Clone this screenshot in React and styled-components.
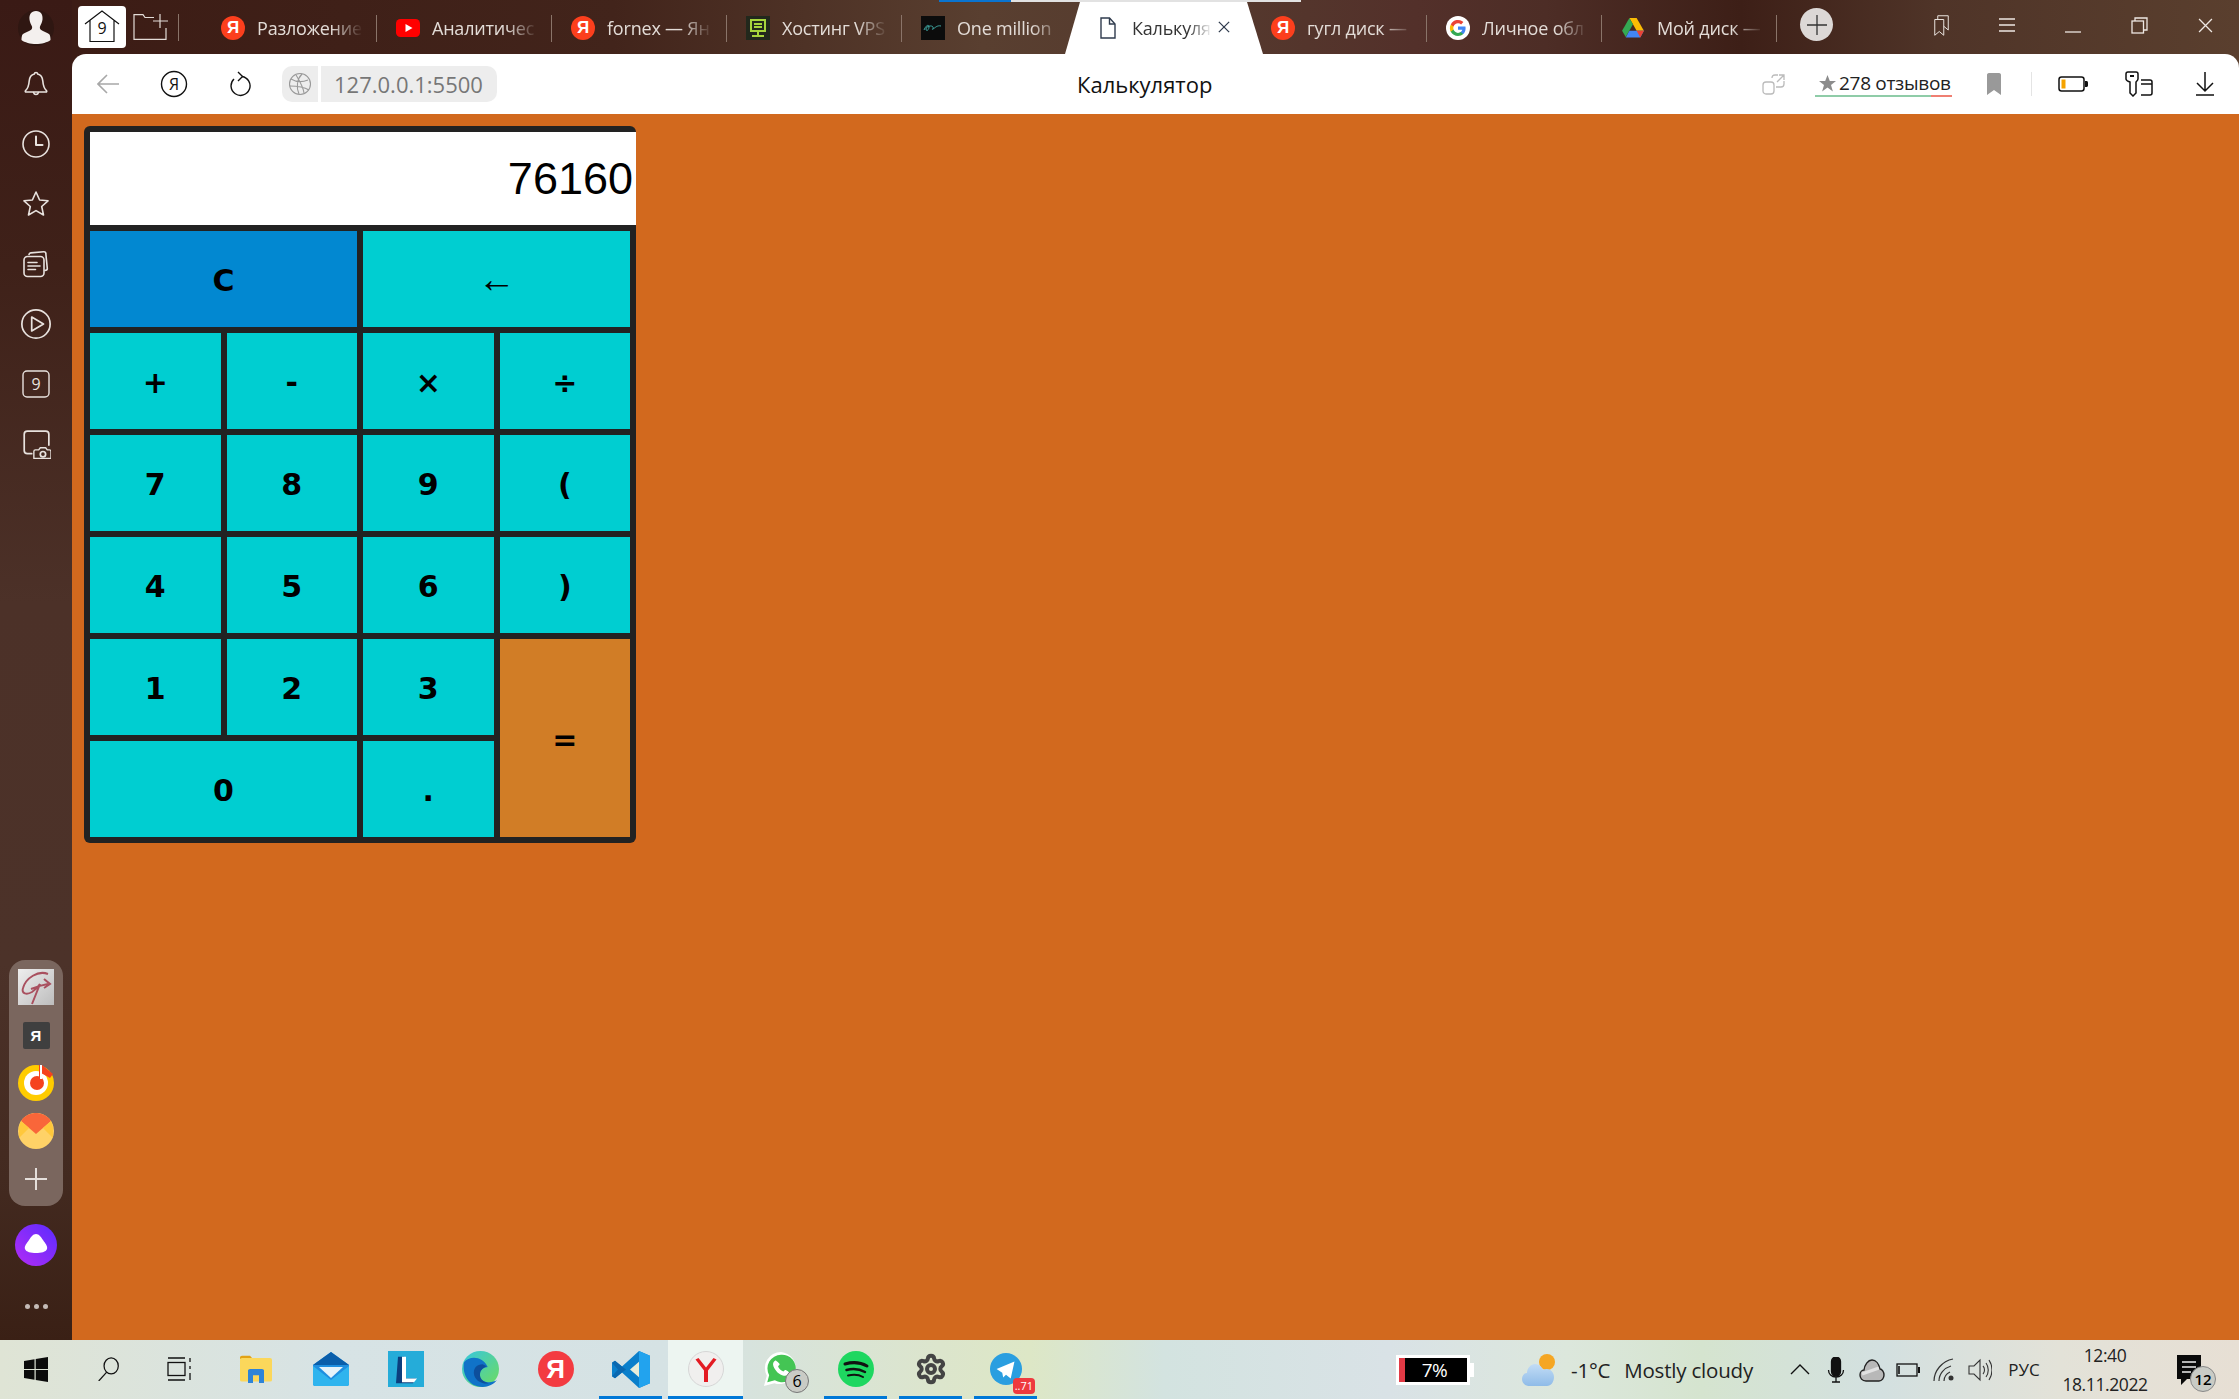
import styled, { createGlobalStyle } from 'styled-components'
import { Settings } from 'lucide-react'

const Global = createGlobalStyle`
  html, body { margin: 0; padding: 0; }
  body { font-family: "Open Sans", "Noto Sans", sans-serif; }
`

const Screen = styled.div`
  width: 2239px;
  height: 1399px;
  display: flex;
  flex-direction: column;
  overflow: hidden;
`
const Main = styled.div`
  flex: 1;
  display: flex;
  min-height: 0;
`
const Sidebar = styled.aside`
  width: 72px;
  flex: none;
  display: flex;
  flex-direction: column;
  align-items: center;
  background: linear-gradient(180deg, #3a1a15 0%, #3f2119 20%, #4c3128 45%, #4c3229 72%, #432a20 88%, #3a2015 100%);
`
const Avatar = styled.div`
  height: 54px;
  display: flex;
  align-items: center;
  justify-content: center;
  padding-top: 2px;
  box-sizing: border-box;
`
const SideButton = styled.div`
  height: 60px;
  width: 72px;
  flex: none;
  display: flex;
  align-items: center;
  justify-content: center;
`
const AppsPanel = styled.div`
  margin-top: auto;
  width: 54px;
  height: 246px;
  box-sizing: border-box;
  padding-top: 3px;
  background: #7a665e;
  border-radius: 16px;
  display: flex;
  flex-direction: column;
  align-items: center;
`
const PanelApp = styled.div`
  height: 48px;
  width: 54px;
  flex: none;
  display: flex;
  align-items: center;
  justify-content: center;
`
const YaSquare = styled.span`
  width: 27px;
  height: 27px;
  border-radius: 2px;
  background: #3f3f3f;
  color: #fff;
  font: 700 15px "Liberation Sans", sans-serif;
  display: flex;
  align-items: center;
  justify-content: center;
`
const Alice = styled.div`
  margin-top: 18px;
  height: 42px;
`
const Dots = styled.div`
  margin: 38px 0 31px;
  display: flex;
  gap: 4px;
  span {
    width: 5px;
    height: 5px;
    border-radius: 50%;
    background: #c4bbb6;
  }
`

const Browser = styled.div`
  flex: 1;
  min-width: 0;
  display: flex;
  flex-direction: column;
  background: linear-gradient(90deg, #3c1c15 0%, #42241b 25%, #593f30 42%, #553a2e 52%, #53302a 62%, #4d2d26 68%, #3d1f17 77%, #4f3428 86%, #5a3f2e 100%);
`
const TabStrip = styled.div`
  position: relative;
  height: 54px;
  flex: none;
  display: flex;
  align-items: flex-start;
  padding-left: 6px;
`
const LoadBar = styled.div`
  position: absolute;
  top: 0;
  left: 867px;
  width: 362px;
  height: 2px;
  background: linear-gradient(90deg, #0a74d0 0 72px, #e2e2e2 72px);
`
const HomeButton = styled.div`
  width: 48px;
  height: 42px;
  margin-top: 6px;
  flex: none;
  background: #fff;
  border-radius: 4px;
  display: flex;
  align-items: center;
  justify-content: center;
`
const NewGroup = styled.div`
  margin: 14px 0 0 7px;
  width: 46px;
  height: 27px;
  flex: none;
  border-right: 1px solid #8a7469;
  box-sizing: border-box;
`
const TabList = styled.div`
  display: flex;
  margin-left: 23px;
  flex: none;
`
const Tab = styled.div`
  position: relative;
  width: 175px;
  height: 52px;
  margin-top: 2px;
  flex: none;
  box-sizing: border-box;
  display: flex;
  align-items: center;
  padding: 0 0 0 19px;
  color: ${p => (p.$active ? '#333' : '#e3dcd7')};
  font-size: 18px;
  letter-spacing: -0.2px;
  &::before {
    content: ${p => (p.$active ? '""' : 'none')};
    position: absolute;
    top: 0;
    bottom: 0;
    left: -12px;
    right: -11px;
    background: #fff;
    clip-path: polygon(15px 0, calc(100% - 16px) 0, 100% 100%, 0 100%);
  }
  &::after {
    content: ${p => (p.$sep ? '""' : 'none')};
    position: absolute;
    right: 0;
    top: 13px;
    height: 27px;
    width: 1px;
    background: #8a7469;
  }
`
const FavSlot = styled.span`
  position: relative;
  width: 24px;
  height: 24px;
  flex: none;
  display: flex;
  align-items: center;
  justify-content: center;
`
const TabTitle = styled.span`
  position: relative;
  margin-left: 12px;
  width: ${p => (p.$active ? '80px' : '106px')};
  white-space: nowrap;
  overflow: hidden;
  -webkit-mask-image: linear-gradient(90deg, #000 70%, transparent 100%);
  mask-image: linear-gradient(90deg, #000 70%, transparent 100%);
`
const TabClose = styled.span`
  position: relative;
  margin: -3px 0 0 6px;
  display: flex;
`
const YaBadge = styled.span`
  width: ${p => p.$size || 24}px;
  height: ${p => p.$size || 24}px;
  border-radius: 50%;
  background: ${p => p.$bg || '#fc3f1d'};
  color: #fff;
  font: 700 ${p => (p.$size ? 26 : 17)}px "Liberation Sans", sans-serif;
  display: flex;
  align-items: center;
  justify-content: center;
  letter-spacing: 0;
`
const PlusButton = styled.div`
  width: 33px;
  height: 33px;
  margin: 8px 0 0 23px;
  flex: none;
  border-radius: 50%;
  background: #dcd8d6;
  display: flex;
  align-items: center;
  justify-content: center;
`
const WindowControls = styled.div`
  margin-left: auto;
  margin-right: 1px;
  display: flex;
  height: 50px;
`
const WindowButton = styled.div`
  width: 66px;
  height: 50px;
  display: flex;
  align-items: center;
  justify-content: center;
`

const Toolbar = styled.div`
  height: 60px;
  flex: none;
  box-sizing: border-box;
  background: #fff;
  border-radius: 14px 14px 0 0;
  display: grid;
  grid-template-columns: 1005px auto 1fr;
  align-items: center;
`
const NavGroup = styled.div`
  display: flex;
  align-items: center;
  padding-left: 3px;
`
const NavButton = styled.div`
  width: 66px;
  height: 40px;
  flex: none;
  display: flex;
  align-items: center;
  justify-content: center;
`
const GlobeChip = styled.div`
  width: 36px;
  height: 36px;
  margin-left: 9px;
  background: #ededed;
  border-radius: 10px 0 0 10px;
  display: flex;
  align-items: center;
  justify-content: center;
`
const UrlChip = styled.div`
  width: 176px;
  height: 36px;
  margin-left: 3px;
  box-sizing: border-box;
  padding-left: 13px;
  background: #ededed;
  border-radius: 0 10px 10px 0;
  color: #777;
  font-size: 22px;
  line-height: 36px;
`
const PageTitle = styled.div`
  font-size: 22px;
  color: #111;
`
const ToolGroup = styled.div`
  display: flex;
  align-items: center;
  justify-content: flex-end;
  margin-right: 1px;
`
const Reviews = styled.div`
  margin: 0 5px 0 21px;
  width: 137px;
  height: 26px;
  box-sizing: border-box;
  display: flex;
  align-items: center;
  gap: 3px;
  padding-left: 4px;
  border-bottom: 2px solid;
  border-image: linear-gradient(90deg, #8fcca8 0 115px, #ef7f72 115px) 1;
  color: #222;
  font-size: 19px;
  letter-spacing: -0.3px;
  white-space: nowrap;
`
const ToolSlot = styled.div`
  width: ${p => p.$w || 66}px;
  height: 40px;
  flex: none;
  display: flex;
  align-items: center;
  justify-content: center;
`
const ToolDivider = styled.div`
  width: 1px;
  height: 24px;
  background: #e4e4e4;
  margin: 0 8px 0 0;
`

const Page = styled.main`
  flex: 1;
  background: #d2691e;
  padding: 12px;
  box-sizing: border-box;
`
const Calculator = styled.div`
  display: inline-grid;
  grid-template-columns: repeat(4, 130.5px);
  grid-template-rows: 93px repeat(6, 96px);
  gap: 6px;
  padding: 6px;
  background: #222;
  border-radius: 6px;
  vertical-align: top;
`
const Display = styled.div`
  grid-column: 1 / -1;
  width: calc(100% + 6px);
  background: #fff;
  color: #000;
  font: 400 45px "Liberation Sans", sans-serif;
  display: flex;
  align-items: center;
  justify-content: flex-end;
  padding-right: 3px;
  box-sizing: border-box;
`
const Key = styled.button`
  border: 0;
  padding: 2px 0 0;
  margin: 0;
  color: #000;
  font: 700 30px "DejaVu Sans", Verdana, sans-serif;
  background: ${p => p.$bg || '#00ced1'};
  grid-column: ${p => (p.$wide ? 'span 2' : 'auto')};
  grid-row: ${p => (p.$tall ? 'span 2' : 'auto')};
`
const ThinKey = styled(Key)`
  padding: 0;
  font: 400 38px "Liberation Serif", serif;
`

const Taskbar = styled.footer`
  height: 59px;
  flex: none;
  display: flex;
  align-items: stretch;
  color: #222;
  background: linear-gradient(90deg, #dfe4d5 0%, #d7e3e5 15%, #d5e2e4 30%, #dce5cc 42%, #dde7c6 46%, #d3e3e0 52%, #d9e2e6 62%, #dce7dc 70%, #d5e4cf 76%, #d3e0e0 84%, #e3e2d8 92%, #e7dfd4 100%);
`
const TaskButton = styled.div`
  position: relative;
  width: ${p => p.$w || 75}px;
  flex: none;
  display: flex;
  align-items: center;
  justify-content: center;
  padding-bottom: 1px;
  box-sizing: border-box;
  background: ${p => (p.$active ? '#edf5f1' : 'transparent')};
  margin-left: ${p => p.$ml || 0}px;
  &::after {
    content: ${p => (p.$open ? '""' : 'none')};
    position: absolute;
    left: ${p => (p.$active ? 0 : 6)}px;
    right: ${p => (p.$active ? 0 : 6)}px;
    bottom: 0;
    height: 3px;
    background: #0078d7;
  }
`
const CountBadge = styled.span`
  position: absolute;
  right: 9px;
  bottom: 6px;
  width: 24px;
  height: 24px;
  border-radius: 50%;
  background: #c9cbc5;
  border: 1px solid #777;
  box-sizing: border-box;
  color: #000;
  font-size: 16px;
  display: flex;
  align-items: center;
  justify-content: center;
`
const RedBadge = styled.span`
  position: absolute;
  right: 8px;
  bottom: 5px;
  padding: 0 2px;
  height: 16px;
  border-radius: 4px;
  background: #ee3a3f;
  color: #fff;
  font-size: 11px;
  line-height: 15px;
`
const Tray = styled.div`
  margin-left: auto;
  display: flex;
  align-items: center;
`
const BatteryWidget = styled.div`
  position: relative;
  width: 74px;
  height: 30px;
  flex: none;
  margin-top: 1px;
  box-sizing: border-box;
  border: 3px solid #fff;
  background: linear-gradient(90deg, #e23a45 0 6px, #000 6px);
  color: #fff;
  font-size: 19px;
  text-align: center;
  line-height: 24px;
  padding-left: 3px;
  letter-spacing: -0.5px;
  &::after {
    content: "";
    position: absolute;
    right: -7px;
    top: 5px;
    width: 4px;
    height: 14px;
    background: #fff;
  }
`
const WeatherIcon = styled.div`
  margin: 3px 0 0 52px;
  width: 36px;
  flex: none;
  display: flex;
`
const WeatherText = styled.div`
  margin-left: 13px;
  width: 211px;
  flex: none;
  display: flex;
  gap: 14px;
  font-size: 20.5px;
  letter-spacing: -0.2px;
  white-space: nowrap;
  color: #222;
`
const TrayIcon = styled.div`
  width: 36px;
  flex: none;
  display: flex;
  justify-content: center;
  position: relative;
`
const Lang = styled.div`
  width: 52px;
  flex: none;
  text-align: center;
  font-size: 17px;
`
const Clock = styled.div`
  width: 86px;
  margin-left: 12px;
  flex: none;
  text-align: center;
  font-size: 17.5px;
  line-height: 29px;
  letter-spacing: -0.4px;
`
const NotifyButton = styled.div`
  position: relative;
  width: 50px;
  margin-left: 17px;
  margin-right: 24px;
  flex: none;
  display: flex;
  justify-content: center;
`
const NotifyCount = styled.span`
  position: absolute;
  left: 25px;
  top: 11px;
  width: 26px;
  height: 26px;
  border-radius: 50%;
  border: 1px solid #888;
  background: #c9cbc5;
  box-sizing: border-box;
  color: #000;
  font-size: 15px;
  font-weight: 600;
  display: flex;
  align-items: center;
  justify-content: center;
`

const Line = ({ size = 28, color = '#e8e2de', sw = 1.6, children }) => (
  <svg width={size} height={size} viewBox="0 0 28 28" fill="none" stroke={color} strokeWidth={sw} strokeLinecap="round" strokeLinejoin="round">
    {children}
  </svg>
)

const Bell = () => <Line><path d="M14 2.5c-1 0-1.6.7-1.7 1.6C9 5 7.5 7.8 7.2 11c-.3 4-.8 7-3.7 9.7-.5.6-.2 1.3.6 1.3h19.8c.8 0 1.1-.7.6-1.3-2.9-2.7-3.4-5.7-3.7-9.7-.3-3.2-1.8-6-5.1-6.9C15.6 3.2 15 2.5 14 2.5Z" /><path d="M11.5 22.5c.4 1.3 1.3 2 2.500 2s2.100-.7 2.500-2" /></Line>
const ClockIcon = () => <Line><circle cx="14" cy="14" r="13" /><path d="M14 6.500v8.500h6.500" strokeWidth="2" /></Line>
const Star = () => <Line><path d="M14 2l3.600 8 8.400.8-6.300 5.700 1.800 8.500L14 20.600 6.500 25l1.800-8.500L2 10.800l8.400-.8Z" /></Line>
const Collections = () => <Line><rect x="2" y="6.500" width="20" height="20" rx="3.500" /><path d="M7 4.500c.2-1 .9-1.500 1.800-1.600l13-1.200c1-.1 2 .7 2 1.700l1.500 15c.1 1-.5 1.900-2.300 2.100" /><path d="M6 12.500h9M6 16h12M6 19.500h7.500" /></Line>
const Play = () => <Line size={30}><circle cx="14" cy="14" r="13.200" /><path d="M10 7.500l11 6.500-11 6.500Z" /></Line>
const NineBox = () => (
  <svg width="28" height="28" viewBox="0 0 28 28" fill="none" stroke="#e8e2de" strokeWidth="1.4">
    <rect x="1" y="1" width="26" height="26" rx="4" />
    <text x="14" y="20" textAnchor="middle" fontSize="16" fill="#e8e2de" stroke="none" fontFamily="Open Sans">9</text>
  </svg>
)
const Camera = () => <Line size={30}><path d="M10 23H6c-2 0-3-1-3-3V5c0-2 1-3 3-3h17c2 0 3 1 3 3v10" /><path d="M12 27.500v-6.500c0-1 .5-1.500 1.500-1.500h3l1.500-2h5l1.500 2h2c1 0 1.500.5 1.500 1.500v6.500Z" fill="#442a21" strokeWidth="1.3" /><circle cx="20.500" cy="23.500" r="2.500" /></Line>

const AvatarIcon = () => (
  <svg width="36" height="36" viewBox="0 0 36 36">
    <circle cx="18" cy="18" r="18" fill="#2f1712" />
    <path d="M18 1c-5 0-7 4-6.500 8.500.3 2.500 1.300 4.500 2.300 6.500.7 1.500.4 3-1 4-2 1.500-5.800 2.500-7.800 4-1.300 1-1.500 4-1.500 6 3 2.500 9 4 14.500 4s11.500-1.500 14.500-4c0-2-.2-5-1.500-6-2-1.500-5.800-2.500-7.800-4-1.400-1-1.700-2.500-1-4 1-2 2-4 2.300-6.500C25 5 23 1 18 1Z" fill="#f4f0ee" />
  </svg>
)
const HomeIcon = () => (
  <svg width="36" height="34" viewBox="0 0 36 34" fill="none" stroke="#111" strokeWidth="1.2">
    <path d="M1 14L18 1l17 13M6 10.500V31.500h24V10.500" />
    <text x="18" y="24" textAnchor="middle" fontSize="16" fill="#111" stroke="none" fontFamily="Open Sans">9</text>
  </svg>
)
const NewFolder = () => (
  <svg width="36" height="26" viewBox="0 0 36 26" fill="none" stroke="#e3dcd7" strokeWidth="1.2">
    <path d="M21 3.500H12L10 .7H1v24.600h32V14M27 0v14M20 7h15" />
  </svg>
)
const YoutubeFav = () => (
  <svg width="24" height="18" viewBox="0 0 24 18"><rect width="24" height="18" rx="4.500" fill="#f00" /><path d="M9.500 5l7 4-7 4Z" fill="#fff" /></svg>
)
const VpsFav = () => (
  <svg width="24" height="24" viewBox="0 0 24 24"><rect width="24" height="24" fill="#22281c" /><g fill="none" stroke="#a7d53c" strokeWidth="2"><rect x="5" y="4" width="14" height="11" /><path d="M8 8h8M8 11h8M12 15v4M6 20h12" /></g></svg>
)
const MillionFav = () => (
  <svg width="24" height="24" viewBox="0 0 24 24"><rect width="24" height="24" fill="#0c0c0c" /><path d="M3 14c2-5 5-6 5-3s-3 5-3 2 6-4 7-2-2 3 0 2 4-4 8-3" fill="none" stroke="#3fa7a2" strokeWidth="1" /></svg>
)
const PageFav = () => (
  <svg width="16" height="22" viewBox="0 0 16 22" fill="#fff" stroke="#2f3b4d" strokeWidth="1.4">
    <path d="M1 1h8.500L15 7v14H1Z" /><path d="M9.500 1v6H15" fill="none" />
  </svg>
)
const GoogleFav = () => (
  <svg width="24" height="24" viewBox="0 0 24 24">
    <circle cx="12" cy="12" r="12" fill="#fff" />
    <path d="M19.600 12.200c0-.6-.1-1.100-.2-1.600H12v3.100h4.300c-.2 1-.7 1.800-1.600 2.400v2h2.600c1.500-1.400 2.300-3.400 2.300-5.900Z" fill="#4285f4" />
    <path d="M12 20c2.200 0 4-.7 5.300-1.900l-2.600-2c-.7.5-1.600.8-2.700.8-2.100 0-3.900-1.400-4.500-3.300H4.800v2.100C6.100 18.300 8.900 20 12 20Z" fill="#34a853" />
    <path d="M7.500 13.600c-.3-1-.3-2.100 0-3.100V8.400H4.800a8 8 0 0 0 0 7.300Z" fill="#fbbc05" />
    <path d="M12 7.200c1.200 0 2.300.4 3.100 1.200l2.300-2.300A8 8 0 0 0 4.800 8.400l2.700 2.100c.6-1.900 2.400-3.300 4.500-3.300Z" fill="#ea4335" />
  </svg>
)
const DriveFav = () => (
  <svg width="22" height="20" viewBox="0 0 24 22">
    <path d="M8 0h8l8 14h-8Z" fill="#fbbc04" />
    <path d="M8 0l4 7-8 14-4-7Z" fill="#34a853" />
    <path d="M8 14h16l-4 7.500H4Z" fill="#4285f4" />
    <path d="M16 14h8l-4 7.500Z" fill="#ea4335" />
  </svg>
)
const CloseX = ({ size = 12, color = '#2f3b4d', sw = 1.5 }) => (
  <svg width={size} height={size} viewBox="0 0 14 14" stroke={color} strokeWidth={sw}><path d="M1 1l12 12M13 1L1 13" /></svg>
)
const PlusIcon = ({ size = 20, color = '#333', sw = 1.3 }) => (
  <svg width={size} height={size} viewBox="0 0 20 20" stroke={color} strokeWidth={sw}><path d="M10 0v20M0 10h20" /></svg>
)
const Bookmarks = () => (
  <svg width="19" height="21" viewBox="0 0 20 28" fill="none" stroke="#eee7e2" strokeWidth="1.3">
    <path d="M1 6h12v21l-6-5-6 5Z" /><path d="M5 6V1h14v19l-6-5" />
  </svg>
)
const MenuLines = () => (
  <svg width="16" height="14" viewBox="0 0 16 14" stroke="#eee7e2" strokeWidth="1.3"><path d="M0 1h16M0 7h16M0 13h16" /></svg>
)
const MinLine = () => (
  <svg width="16" height="16" viewBox="0 0 16 16" stroke="#eee7e2" strokeWidth="1.3"><path d="M0 15h16" /></svg>
)
const RestoreIcon = () => (
  <svg width="17" height="17" viewBox="0 0 17 17" fill="none" stroke="#eee7e2" strokeWidth="1.3"><rect x="1" y="4" width="11.500" height="12" /><path d="M4 4V1h12v12h-3.500" /></svg>
)

const BackArrow = () => (
  <svg width="22" height="20" viewBox="0 0 22 20" fill="none" stroke="#a8a8a8" strokeWidth="1.6"><path d="M22 10H1M10 1l-9 9 9 9" /></svg>
)
const YaCircle = () => (
  <svg width="28" height="28" viewBox="0 0 28 28">
    <circle cx="14" cy="14" r="12.500" fill="none" stroke="#111" strokeWidth="1.4" />
    <text x="14" y="20" textAnchor="middle" fontSize="16" fill="#111" fontFamily="Open Sans">Я</text>
  </svg>
)
const Reload = () => (
  <svg width="22" height="26" viewBox="0 0 22 26" fill="none" stroke="#111" strokeWidth="1.4"><path d="M13 5.500a9.500 9.500 0 1 1-8 2.500" /><path d="M9 1l4.500 4.500L9 10" /></svg>
)
const Globe = () => (
  <svg width="24" height="24" viewBox="0 0 24 24" fill="none" stroke="#999" strokeWidth="1.1">
    <circle cx="12" cy="12" r="10.500" /><path d="M3 7c5 3 12 3 17 1M2 14c5 0 14 1 19 4M14 2c-5 5-6 13-3 20M8 3c3 5 7 11 8 18" />
  </svg>
)
const ShareLink = () => (
  <svg width="24" height="22" viewBox="0 0 24 22" fill="none" stroke="#bbb" strokeWidth="1.3">
    <rect x="1" y="9" width="11" height="12" rx="3" /><path d="M10 5c0-2 1-3 3-3h3M22 8v3c0 2-1 3-3 3h-5M15 9l7-7M17 2h5v5" />
  </svg>
)
const StarSolid = () => (
  <svg width="17" height="17" viewBox="0 0 17 17"><path d="M8.500 0l2.300 6H17l-5 3.900 1.900 6.600-5.400-3.900-5.400 3.900L5 9.900 0 6h6.200Z" fill="#8c8c8c" /></svg>
)
const BookmarkSolid = () => (
  <svg width="16" height="22" viewBox="0 0 16 22"><path d="M1 2c0-1 .5-2 2-2h10c1.500 0 2 1 2 2v20l-7-5-7 5Z" fill="#999" /></svg>
)
const BatteryTool = () => (
  <svg width="30" height="16" viewBox="0 0 30 16">
    <rect x="1" y="1" width="25" height="14" rx="2.500" fill="#fff" stroke="#111" strokeWidth="1.5" />
    <rect x="3.500" y="3.500" width="4" height="9" fill="#f5a300" />
    <path d="M27 5h1.500c.8 0 1.500.7 1.500 1.500v3c0 .8-.7 1.500-1.500 1.500H27Z" fill="#111" />
  </svg>
)
const KeyTool = () => (
  <svg width="28" height="26" viewBox="0 0 28 26" fill="none" stroke="#111" strokeWidth="1.5">
    <path d="M16 9h9c1.500 0 2 1 2 2v11c0 1-.5 2-2 2h-9" /><path d="M16 13h11" />
    <path d="M1 3c0-1 1-2 2-2h8c1 0 2 1 2 2v5c0 1-1 2-2 3v11l-3 3-3-3V11C2 10 1 9 1 8Z" fill="#fff" /><path d="M5 5h4" strokeWidth="2" />
  </svg>
)
const Download = () => (
  <svg width="20" height="24" viewBox="0 0 20 24" fill="none" stroke="#111" strokeWidth="1.5"><path d="M10 0v18M2 11l8 8 8-8M1 23h18" /></svg>
)

const GlyphG = () => (
  <svg width="36" height="36" viewBox="0 0 36 36">
    <defs><linearGradient id="gg" x1="0" y1="0" x2="1" y2="1"><stop offset="0" stopColor="#eee" /><stop offset="1" stopColor="#bdbdbd" /></linearGradient></defs>
    <rect width="36" height="36" fill="url(#gg)" />
    <path d="M30 5C20 1 8 9 5 19c-2 6 4 7 9 4 3-2 6-5 8-8l-8 20M13 20c5-2 11-4 17-5M26 10l6 5-6 4" fill="none" stroke="#a9505f" strokeWidth="2" />
  </svg>
)
const MusicApp = () => (
  <svg width="36" height="36" viewBox="0 0 36 36">
    <circle cx="18" cy="18" r="18" fill="#ffcc00" />
    <circle cx="18" cy="18" r="12" fill="#fff" />
    <circle cx="19" cy="18" r="7" fill="#f5421e" />
    <path d="M21 0h3l11 9-3 4-9-5v9h-2Z" fill="#f5421e" />
    <path d="M22 0h2v14h-2Z" fill="#fff" />
  </svg>
)
const MailApp = () => (
  <svg width="36" height="36" viewBox="0 0 36 36">
    <circle cx="18" cy="18" r="18" fill="#ffd267" />
    <path d="M3 8a18 18 0 0 1 30 0L18 21Z" fill="#f9663a" />
    <path d="M1 16c0-3 1-6 2-8l8 7-10 10c0-3 0-6 0-9ZM35 16c0-3-1-6-2-8l-8 7 10 10Z" fill="#ffc83c" />
  </svg>
)
const AliceIcon = () => (
  <svg width="42" height="42" viewBox="0 0 42 42">
    <defs><linearGradient id="al" x1="0" y1="1" x2="1" y2="0"><stop offset="0" stopColor="#b32cf5" /><stop offset="1" stopColor="#5a2cff" /></linearGradient></defs>
    <circle cx="21" cy="21" r="21" fill="url(#al)" />
    <path d="M21 10c3 0 5 3 7 6 2 3 5 6 4 9-1 3-6 4-11 4s-10-1-11-4c-1-3 2-6 4-9 2-3 4-6 7-6Z" fill="#fff" />
  </svg>
)

const WinLogo = () => (
  <svg width="24" height="25" viewBox="0 0 24 25" fill="#0b0b0b">
    <path d="M0 4l10.500-1.800V12H0ZM11.700 2L24 0v12H11.700ZM0 13h10.500v9.800L0 21ZM11.700 13H24v12l-12.300-2Z" />
  </svg>
)
const SearchIcon = () => (
  <svg width="25" height="24" viewBox="0 0 24 27" fill="none" stroke="#111" strokeWidth="1.4"><ellipse cx="15" cy="10" rx="8" ry="9" /><path d="M10 17L1 27" /></svg>
)
const TaskView = () => (
  <svg width="26" height="24" viewBox="0 0 26 24" fill="none" stroke="#111" strokeWidth="1.3"><rect x="1" y="5.500" width="17" height="13" /><path d="M1 1h17M1 23h17M23 1v4M23 9v3M23 16v7" /></svg>
)
const FolderIcon = () => (
  <svg width="32" height="28" viewBox="0 0 32 36" preserveAspectRatio="none">
    <path d="M0 3c0-1 1-2 2-2h8l3 4H0Z" fill="#e2a215" />
    <rect y="4" width="32" height="30" rx="2" fill="#fbd75b" />
    <path d="M8 36V20c0-1 1-2 2-2h12c1 0 2 1 2 2v16h-5v-10h-6v10Z" fill="#2e84d8" />
  </svg>
)
const MailIcon = () => (
  <svg width="36" height="34" viewBox="0 0 36 34">
    <path d="M18 0L36 13v19c0 1-1 2-2 2H2c-1 0-2-1-2-2V13Z" fill="#1f8fe0" />
    <path d="M0 13L18 0l18 13H0Z" fill="#0a5eaa" />
    <path d="M6 15h24L18 26Z" fill="#e6f3fa" />
    <path d="M0 14l18 14 18-14v18c0 1-1 2-2 2H2c-1 0-2-1-2-2Z" fill="#2fb4ee" />
  </svg>
)
const LIcon = () => (
  <svg width="36" height="36" viewBox="0 0 36 38" preserveAspectRatio="none">
    <rect width="36" height="38" fill="#25acd9" />
    <path d="M10 6h6v23h12l-3 5H8Z" fill="#0c3f7e" />
    <path d="M14 6h4v23h11l-3 4H14Z" fill="#fff" />
  </svg>
)
const EdgeIcon = () => (
  <svg width="37" height="36" viewBox="0 0 36 38" preserveAspectRatio="none">
    <defs>
      <linearGradient id="eg" x1="0" y1="0" x2="1" y2="1"><stop offset="0" stopColor="#36c6e0" /><stop offset="1" stopColor="#6fdc5e" /></linearGradient>
    </defs>
    <ellipse cx="18" cy="19" rx="18" ry="19" fill="url(#eg)" />
    <path d="M2 12C0 24 6 38 20 38c6 0 11-3 14-7-5 3-14 3-17-3-2-5 2-10 8-11C20 5 7 5 2 12Z" fill="#1073c8" />
    <path d="M20 14c-5 0-10 4-8 12 2 6 8 9 14 8-6-1-10-6-8-12 1-3 3-5 6-6Z" fill="#0d4f9c" />
  </svg>
)
const VsCode = () => (
  <svg width="38" height="37" viewBox="0 0 38 38" preserveAspectRatio="none">
    <path d="M27 0l11 5v28l-11 5-17-16-7 6-3-2V12l3-2 7 6Z" fill="#0a7fcb" />
    <path d="M27 0l11 5v28l-11 5Z" fill="#22a3ee" />
    <path d="M27 11l-9 8 9 8Z" fill="#e6edda" />
    <path d="M0 12l3-2 7 6 4 3-4 3-7 6-3-2 6-7Z" fill="#0a68b0" />
  </svg>
)
const YandexBrowser = () => (
  <svg width="36" height="36" viewBox="0 0 36 36">
    <circle cx="18" cy="18" r="17.500" fill="#f0efee" stroke="#d6d6d6" />
    <path d="M7.500 8.500l3-1.500L18 16.500 25.500 7l3 1.500L20 19.500V31h-4V19.500Z" fill="#e31b23" />
  </svg>
)
const WhatsApp = () => (
  <svg width="36" height="36" viewBox="0 0 38 38">
    <path d="M19 1a17 17 0 0 0-15 25L1 37l11-3A17 17 0 1 0 19 1Z" fill="#fff" />
    <path d="M19 4a14.500 14.500 0 0 0-12.500 21.500L4.500 33l8-2.200A14.500 14.500 0 1 0 19 4Z" fill="#44c554" />
    <path d="M13 10c-2 1-3 3-2 6 2 5 6 9 11 10 3 .5 5-1 5.500-3 .2-1-3-3-4-3s-1.500 2-2.500 1.500c-2-1-4-3-5-5-.3-1 1.500-1.500 1.500-2.500S14 10 13 10Z" fill="#fff" />
  </svg>
)
const Spotify = () => (
  <svg width="36" height="36" viewBox="0 0 36 36" fill="none" stroke="#111" strokeLinecap="round">
    <circle cx="18" cy="18" r="18" fill="#1ed760" stroke="none" />
    <path d="M7 13c7-2 15-2 22 2" strokeWidth="3" /><path d="M8.500 19c6-1.500 13-1 18.500 2" strokeWidth="2.500" /><path d="M10 24.500c5-1 11-.8 15 1.500" strokeWidth="2" />
  </svg>
)
const Telegram = () => (
  <svg width="32" height="32" viewBox="0 0 34 34">
    <circle cx="17" cy="17" r="17" fill="#2a9ee0" />
    <path d="M7 17l19-8-4 18-5-4-3 3-1-5Z" fill="#fff" />
  </svg>
)

const WeatherCloud = () => (
  <svg width="36" height="36" viewBox="0 0 36 36">
    <defs><linearGradient id="wc" x1="0" y1="0" x2="0" y2="1"><stop offset="0" stopColor="#c2dcf5" /><stop offset="1" stopColor="#8fbbe8" /></linearGradient></defs>
    <circle cx="25" cy="9" r="8" fill="#f5a623" />
    <path d="M8 33c-5 0-8-3-8-7 0-3 2-6 5-6 0-5 4-9 8-9 4 0 7 3 8 6 1-1 3-1 4-1 4 0 7 4 7 8 0 5-3 9-7 9Z" fill="url(#wc)" />
  </svg>
)
const TrayChevron = () => (
  <svg width="20" height="11" viewBox="0 0 20 11" fill="none" stroke="#111" strokeWidth="1.4"><path d="M1 10l9-9 9 9" /></svg>
)
const Mic = () => (
  <svg width="18" height="26" viewBox="0 0 18 26" fill="none" stroke="#111" strokeWidth="1.3">
    <rect x="4.500" y="0" width="9" height="19" rx="4.500" fill="#111" /><path d="M1.500 13c0 4 3 7 7.500 7s7.500-3 7.500-7M9 20v5M5 25h8" />
  </svg>
)
const OneDrive = () => (
  <svg width="26" height="24" viewBox="0 0 26 24">
    <path d="M7 23c-4 0-6-3-6-6s2-5 4-5c.5-5 4-10 8-10s7 4 8 9c2 0 4 3 4 6s-2 6-5 6Z" fill="#b8b8b8" stroke="#222" strokeWidth="1.4" />
    <path d="M3 16L20 10" stroke="#f3f3f3" strokeWidth="3" opacity=".7" />
  </svg>
)
const TrayBattery = () => (
  <svg width="24" height="14" viewBox="0 0 24 14" fill="none" stroke="#111" strokeWidth="1.3"><rect x="1" y="1" width="20" height="12" /><path d="M3 3v8" strokeWidth="1.6" /><path d="M23 4v6" strokeWidth="2" /></svg>
)
const Wifi = () => (
  <svg width="22" height="24" viewBox="0 0 22 24" fill="none" stroke="#333" strokeWidth="1.2">
    <path d="M1 23C1 13 9 3 20 1M6 23c0-7 5-13 12-15M11 23c0-4 2-7 6-9" /><circle cx="18" cy="20" r="2.500" fill="#333" stroke="none" />
  </svg>
)
const Speaker = () => (
  <svg width="24" height="24" viewBox="0 0 24 24" fill="none" stroke="#333" strokeWidth="1.1">
    <path d="M1 8h5l6-6v20l-6-6H1Z" /><path d="M15 8c2 2 2 6 0 8M18 5c3 4 3 10 0 14M21 2c4 6 4 14 0 20" />
  </svg>
)
const NotifyIcon = () => (
  <svg width="26" height="30" viewBox="0 0 26 30">
    <path d="M0 0h24v24h-14l-6 6v-6H0Z" fill="#0a0a0a" />
    <path d="M5 7h14M5 12h14M5 17h9" stroke="#eee" strokeWidth="1.5" />
  </svg>
)

const tabs = [
  { title: 'Разложение', icon: <YaBadge>Я</YaBadge>, sep: true },
  { title: 'Аналитичес', icon: <YoutubeFav />, sep: true },
  { title: 'fornex — Ян', icon: <YaBadge>Я</YaBadge>, sep: true },
  { title: 'Хостинг VPS', icon: <VpsFav />, sep: true },
  { title: 'One million', icon: <MillionFav /> },
  { title: 'Калькулятор', icon: <PageFav />, active: true },
  { title: 'гугл диск —', icon: <YaBadge>Я</YaBadge>, sep: true },
  { title: 'Личное обл', icon: <GoogleFav />, sep: true },
  { title: 'Мой диск —', icon: <DriveFav />, sep: true },
]

const keys = [
  { label: 'C', wide: true, bg: '#0288d1' },
  { label: '←', wide: true, thin: true },
  { label: '+' }, { label: '-' }, { label: '×' }, { label: '÷' },
  { label: '7' }, { label: '8' }, { label: '9' }, { label: '(' },
  { label: '4' }, { label: '5' }, { label: '6' }, { label: ')' },
  { label: '1' }, { label: '2' }, { label: '3' },
  { label: '=', tall: true, bg: '#d17d26' },
  { label: '0', wide: true }, { label: '.' },
]

const TabItem = ({ tab }) => (
  <Tab $active={tab.active} $sep={tab.sep}>
    <FavSlot>{tab.icon}</FavSlot>
    <TabTitle $active={tab.active}>{tab.title}</TabTitle>
    {tab.active && <TabClose><CloseX /></TabClose>}
  </Tab>
)

export default function App() {
  return (
    <Screen>
      <Global />
      <Main>
        <Sidebar>
          <Avatar><AvatarIcon /></Avatar>
          <SideButton><Bell /></SideButton>
          <SideButton><ClockIcon /></SideButton>
          <SideButton><Star /></SideButton>
          <SideButton><Collections /></SideButton>
          <SideButton><Play /></SideButton>
          <SideButton><NineBox /></SideButton>
          <SideButton><Camera /></SideButton>
          <AppsPanel>
            <PanelApp><GlyphG /></PanelApp>
            <PanelApp><YaSquare>Я</YaSquare></PanelApp>
            <PanelApp><MusicApp /></PanelApp>
            <PanelApp><MailApp /></PanelApp>
            <PanelApp><PlusIcon size={22} color="#e5dfdb" sw={1.8} /></PanelApp>
          </AppsPanel>
          <Alice><AliceIcon /></Alice>
          <Dots><span /><span /><span /></Dots>
        </Sidebar>
        <Browser>
          <TabStrip>
            <LoadBar />
            <HomeButton><HomeIcon /></HomeButton>
            <NewGroup><NewFolder /></NewGroup>
            <TabList>
              {tabs.map(t => <TabItem key={t.title} tab={t} />)}
            </TabList>
            <PlusButton><PlusIcon /></PlusButton>
            <WindowControls>
              <WindowButton><Bookmarks /></WindowButton>
              <WindowButton><MenuLines /></WindowButton>
              <WindowButton><MinLine /></WindowButton>
              <WindowButton><RestoreIcon /></WindowButton>
              <WindowButton><CloseX size={15} color="#eee7e2" sw={1.2} /></WindowButton>
            </WindowControls>
          </TabStrip>
          <Toolbar>
            <NavGroup>
              <NavButton><BackArrow /></NavButton>
              <NavButton><YaCircle /></NavButton>
              <NavButton><Reload /></NavButton>
              <GlobeChip><Globe /></GlobeChip>
              <UrlChip>127.0.0.1:5500</UrlChip>
            </NavGroup>
            <PageTitle>Калькулятор</PageTitle>
            <ToolGroup>
              <ToolSlot $w={40}><ShareLink /></ToolSlot>
              <Reviews><StarSolid />278 отзывов</Reviews>
              <ToolSlot $w={74}><BookmarkSolid /></ToolSlot>
              <ToolDivider />
              <ToolSlot $w={66}><BatteryTool /></ToolSlot>
              <ToolSlot $w={66}><KeyTool /></ToolSlot>
              <ToolSlot $w={66}><Download /></ToolSlot>
            </ToolGroup>
          </Toolbar>
          <Page>
            <Calculator>
              <Display>76160</Display>
              {keys.map(k => {
                const Comp = k.thin ? ThinKey : Key
                return <Comp key={k.label} $wide={k.wide} $tall={k.tall} $bg={k.bg}>{k.label}</Comp>
              })}
            </Calculator>
          </Page>
        </Browser>
      </Main>
      <Taskbar>
        <TaskButton $w={72}><WinLogo /></TaskButton>
        <TaskButton $w={72}><SearchIcon /></TaskButton>
        <TaskButton $w={72}><TaskView /></TaskButton>
        <TaskButton $ml={2}><FolderIcon /></TaskButton>
        <TaskButton><MailIcon /></TaskButton>
        <TaskButton><LIcon /></TaskButton>
        <TaskButton><EdgeIcon /></TaskButton>
        <TaskButton><YaBadge $size={36} $bg="#f33b41">Я</YaBadge></TaskButton>
        <TaskButton $open><VsCode /></TaskButton>
        <TaskButton $open $active><YandexBrowser /></TaskButton>
        <TaskButton><WhatsApp /><CountBadge>6</CountBadge></TaskButton>
        <TaskButton $open><Spotify /></TaskButton>
        <TaskButton $open><Settings size={32} color="#444" strokeWidth={3} /></TaskButton>
        <TaskButton $open><Telegram /><RedBadge>..71</RedBadge></TaskButton>
        <Tray>
          <BatteryWidget>7%</BatteryWidget>
          <WeatherIcon><WeatherCloud /></WeatherIcon>
          <WeatherText><span>-1°C</span><span>Mostly cloudy</span></WeatherText>
          <TrayIcon><TrayChevron /></TrayIcon>
          <TrayIcon><Mic /></TrayIcon>
          <TrayIcon><OneDrive /></TrayIcon>
          <TrayIcon><TrayBattery /></TrayIcon>
          <TrayIcon><Wifi /></TrayIcon>
          <TrayIcon><Speaker /></TrayIcon>
          <Lang>РУС</Lang>
          <Clock><div>12:40</div><div>18.11.2022</div></Clock>
          <NotifyButton><NotifyIcon /><NotifyCount>12</NotifyCount></NotifyButton>
        </Tray>
      </Taskbar>
    </Screen>
  )
}
